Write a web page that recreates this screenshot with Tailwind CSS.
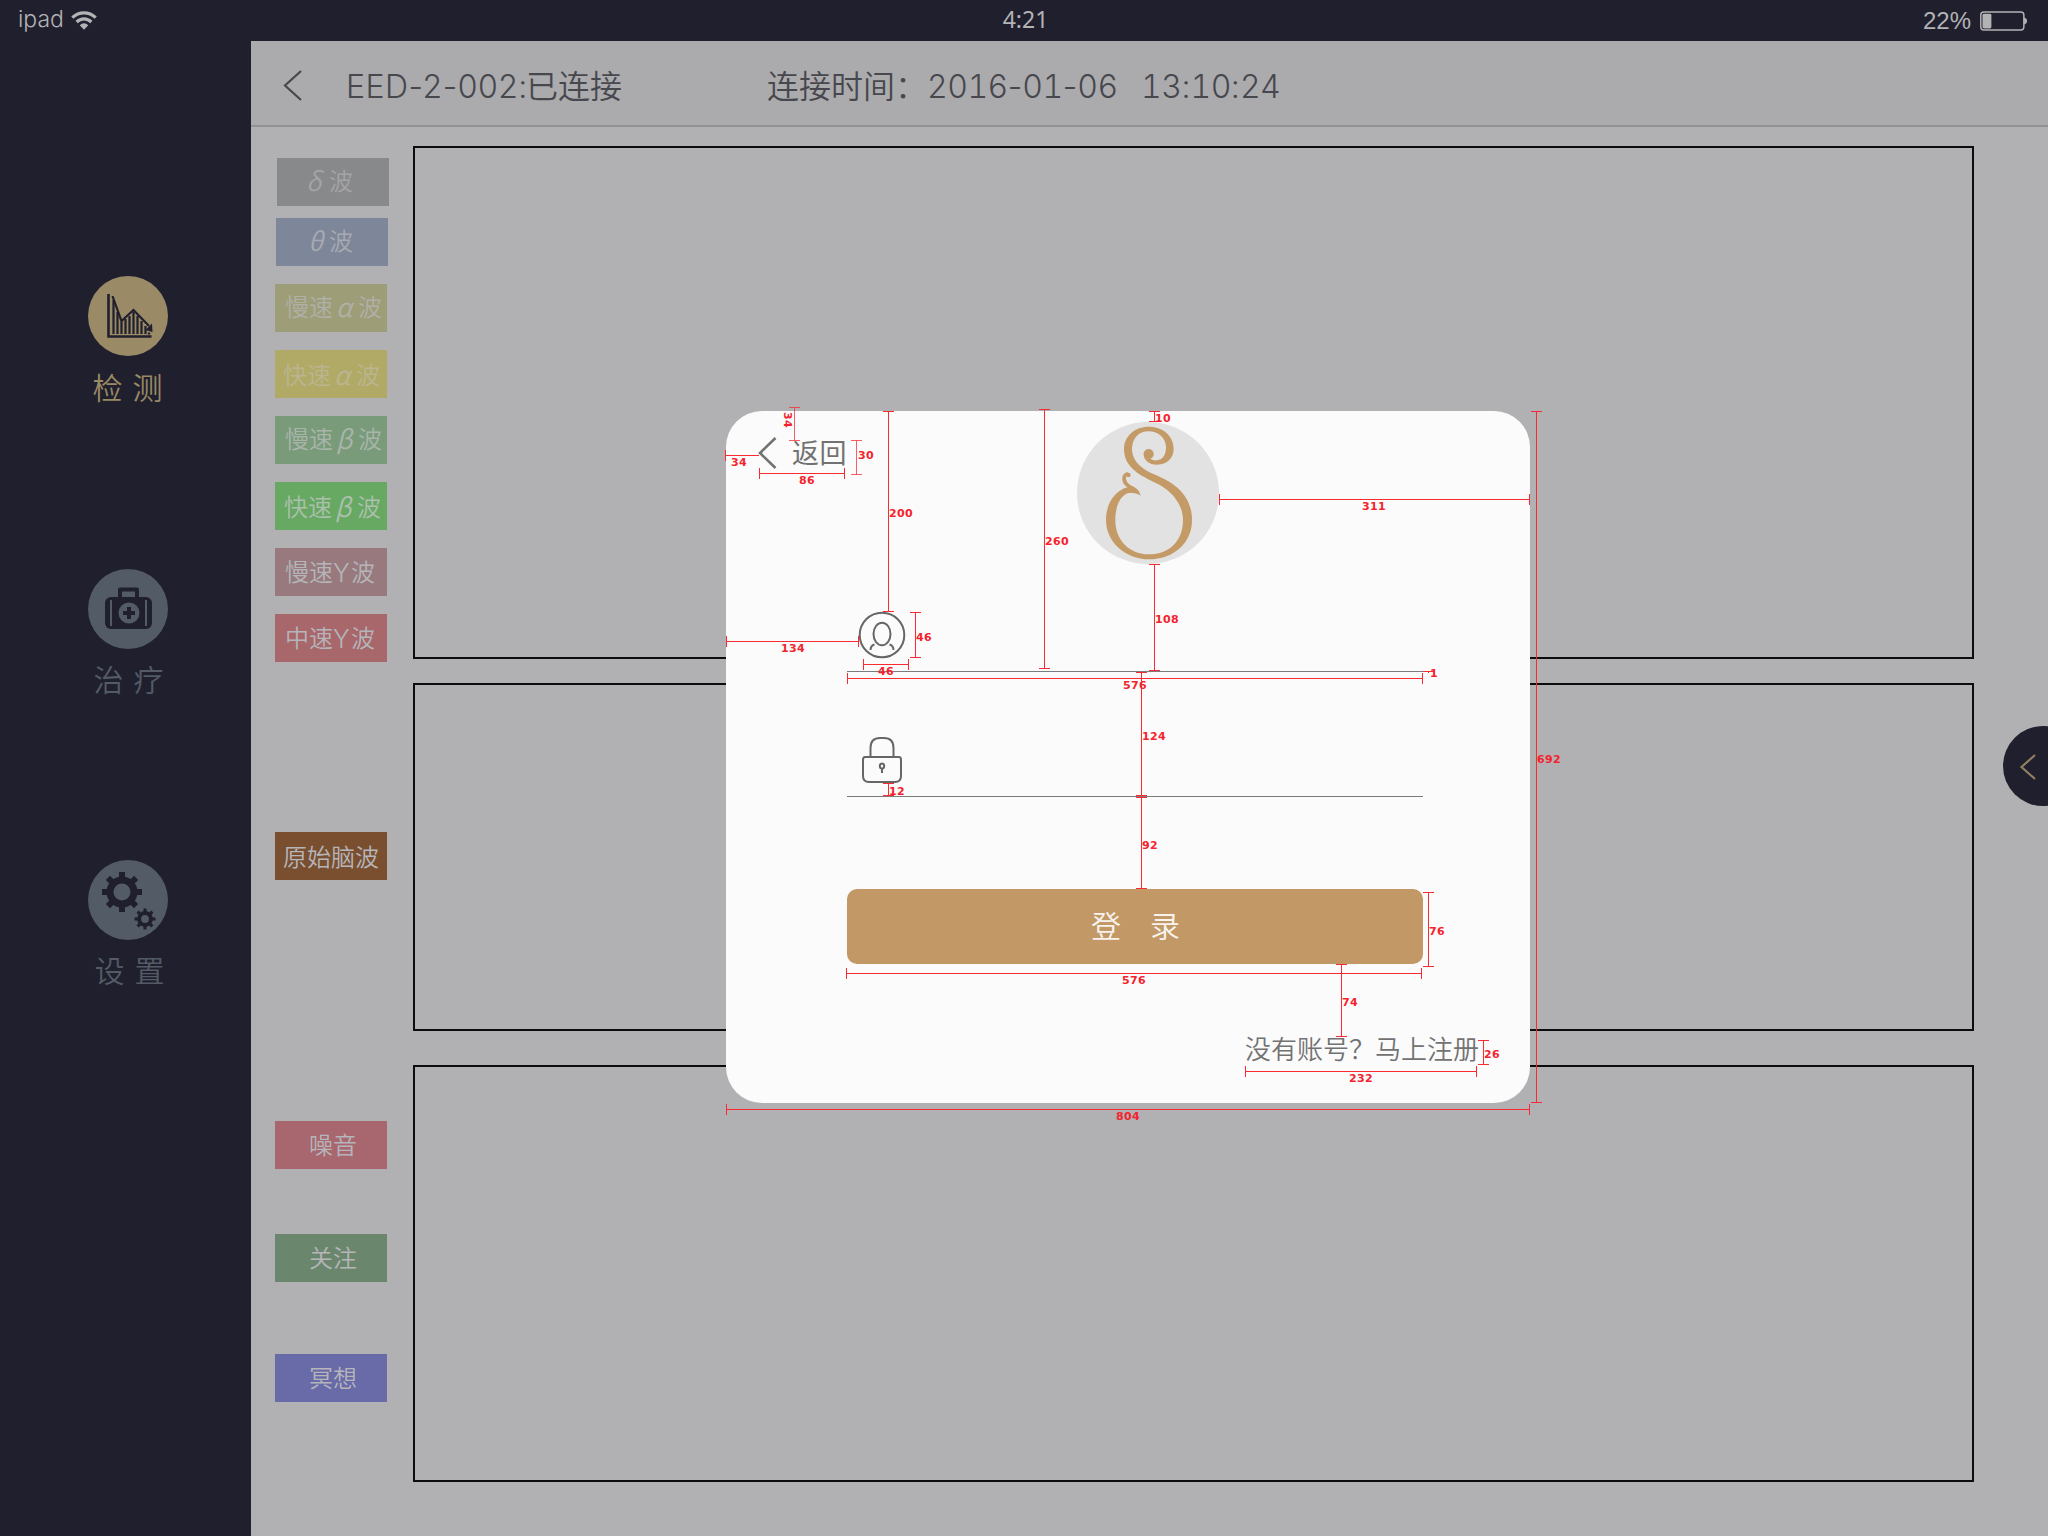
<!DOCTYPE html>
<html lang="zh-CN">
<head>
<meta charset="utf-8">
<title>EED</title>
<script src="https://cdn.jsdelivr.net/npm/@tailwindcss/browser@4"></script>
</head>
<body class="relative flex h-[1536px] w-[2048px] flex-col overflow-hidden bg-[#201f2d] font-['Liberation_Sans','Noto_Sans_CJK_SC',sans-serif]">

<!-- Status bar -->
<header class="flex h-[41px] shrink-0 items-center justify-between pr-5 pl-[18px] text-[#b3b3b6]">
  <div class="flex w-[120px] items-center gap-[7px]">
    <span class="w-[46px] pb-[3px] font-['Inter'] text-[23px] leading-[36px] font-light">ipad</span>
    <svg class="h-[19px] w-[26px]" viewBox="0 0 26 19" fill="none" stroke="currentColor" stroke-width="3.2">
      <path d="M1.3 6.6C8 .3 18 .3 24.7 6.600"/><path d="M5.600 11C10 6.800 16 6.800 20.400 11"/>
      <path d="M8.700 14.300Q13 10.300 17.300 14.300L13 18.700Z" fill="currentColor" stroke="none"/>
    </svg>
  </div>
  <span class="pr-[10px] pb-1 font-['Noto_Sans'] text-[23px] leading-[36px]">4:21</span>
  <div class="flex w-[105px] items-center gap-2">
    <span class="w-[50px] text-[24px] leading-[38px]">22%</span>
    <svg class="h-5 w-12" viewBox="0 0 48 20">
      <rect x=".8" y="1" width="43.500" height="18" rx="3" fill="none" stroke="currentColor" stroke-width="1.500"/>
      <rect x="2.500" y="2.600" width="9" height="15" rx="1.500" fill="currentColor"/>
      <path d="M44.500 6.500C48.500 7 48.500 13 44.500 13.500Z" fill="currentColor"/>
    </svg>
  </div>
</header>

<div class="flex flex-1">
  <!-- Side navigation -->
  <nav class="flex w-[251px] shrink-0 flex-col items-center pt-[235px] pl-[5px] text-[30px] leading-[40px] font-[350]">
    <a class="flex h-[293px] flex-col items-center text-[#9a8a65]">
      <svg class="size-20" viewBox="0 0 80 80">
        <circle cx="40" cy="40" r="40" fill="currentColor"/>
        <g fill="none" stroke="#201f2d">
          <path d="M20.500 18V60.500H63.500" stroke-width="2.600"/>
          <path d="M24.500 20L33.500 45L45.500 34L61 50" stroke-width="2.200"/>
          <path d="M25.500 24V58M29.500 36V58M33.500 46V58M37.500 43V58M41.500 40V58M45.500 36V58M49.500 40V58M53.500 45V58M57.500 50V58" stroke-width="2.200"/>
          <path d="M61 56.500V58.500" stroke-width="2.200"/>
        </g>
        <path d="M64.500 56L57.500 54L64 47.500Z" fill="#201f2d"/>
      </svg>
      <span class="mt-[13px] flex gap-[10px] pr-px"><span>检</span><span>测</span></span>
    </a>
    <a class="flex h-[291px] flex-col items-center text-[#525b66]">
      <svg class="size-20" viewBox="0 0 80 80">
        <circle cx="40" cy="40" r="40" fill="currentColor"/>
        <path d="M32 28V20.500H49V28" fill="none" stroke="#201f2d" stroke-width="4" stroke-linejoin="round"/>
        <rect x="17" y="28" width="47" height="32" rx="6" fill="#201f2d"/>
        <path d="M23 31V57M58 31V57" stroke="currentColor" stroke-width="2"/>
        <circle cx="41" cy="44" r="10.500" fill="currentColor"/>
        <path d="M41 38V50M35 44H47" stroke="#201f2d" stroke-width="4"/>
      </svg>
      <span class="mt-3 flex gap-[10px] pl-px"><span>治</span><span>疗</span></span>
    </a>
    <a class="flex flex-col items-center text-[#525b66]">
      <svg class="size-20" viewBox="0 0 80 80">
        <circle cx="40" cy="40" r="40" fill="currentColor"/>
        <g stroke="#201f2d" fill="none">
          <circle cx="34" cy="32" r="12" stroke-width="7"/>
          <path d="M34 12V18M34 46V52M14 32H20M48 32H54M19.900 17.900L24.500 22.500M43.500 41.500L48.100 46.100M48.100 17.900L43.500 22.500M24.500 41.500L19.900 46.100" stroke-width="6"/>
          <circle cx="57" cy="59" r="5.900" stroke-width="4"/>
          <path d="M57 48.500V53M57 65V69.500M46.500 59H51M63 59H67.500M49.600 51.600L53 55M61 63L64.400 66.400M64.400 51.600L61 55M53 63L49.600 66.400" stroke-width="3"/>
        </g>
      </svg>
      <span class="mt-3 flex gap-[10px] pl-[3px]"><span>设</span><span>置</span></span>
    </a>
  </nav>

  <main class="flex flex-1 flex-col bg-[#b1b1b3]">
    <!-- Title bar -->
    <div class="flex h-[86px] shrink-0 items-center border-b-2 border-[#929295] bg-[#ababad] pt-[3px] pl-8 font-['Inter','Noto_Sans_CJK_SC',sans-serif] text-[32px] font-light text-[#47474e] [&_b]:font-light [&_b]:tracking-[-.5px] [&_b]:tabular-nums [&>span]:pt-1">
      <svg class="h-8 w-5" viewBox="0 0 20 32" fill="none" stroke="currentColor" stroke-width="2.200"><path d="M18 2L2 16.500L18 31"/></svg>
      <span class="ml-[43px] w-[180px] leading-[48px] tracking-[.5px] whitespace-nowrap">EED-2-002:</span>
      <span class="w-[241px] text-[32px] leading-[48px] font-[350]">已连接</span>
      <span class="w-[160px] text-[32px] leading-[48px] font-[350] whitespace-nowrap">连接时间：</span>
      <span class="w-[214px] leading-[48px] whitespace-nowrap"><b>2016</b>-<b>01</b>-<b>06</b></span>
      <span class="leading-[48px] whitespace-nowrap"><b>13</b>:<b>10</b>:<b>24</b></span>
    </div>

    <div class="flex flex-1">
      <!-- Channel legend -->
      <div class="flex w-[162px] shrink-0 flex-col pt-[31px] pl-6 text-[24px] leading-[48px] font-[350] whitespace-nowrap text-[#b5b5ba] [&_i]:-mt-[2px] [&_i]:font-['Noto_Sans_CJK_SC'] [&_i]:text-[26px] [&>div]:flex [&>div]:h-12 [&>div]:w-[112px]">
        <div class="ml-0.5 bg-[#88898b] pl-[29px] text-[#a4a4a7]"><i class="w-[23px]">δ</i>波</div>
        <div class="mt-3 ml-px bg-[#7e8799] pl-[32px] text-[#a7aab2]"><i class="w-[21px]">θ</i>波</div>
        <div class="mt-[18px] bg-[#9d9d77] pl-[10px] text-[#b0b0a8]">慢速<i class="w-[25px] pl-[3px]">α</i>波</div>
        <div class="mt-[18px] bg-[#b1aa66] pl-2 leading-[52px] text-[#bab590]">快速<i class="w-[25px] pl-[3px]">α</i>波</div>
        <div class="mt-[18px] bg-[#7a9b7a] pl-[10px] text-[#a9b5aa]">慢速<i class="w-[25px] pl-[3px]">β</i>波</div>
        <div class="mt-[18px] bg-[#67a863] pl-[9px] leading-[51px] text-[#acc0ad]">快速<i class="w-[25px] pl-[3px]">β</i>波</div>
        <div class="mt-[18px] bg-[#987a7e] pl-[10px] leading-[50px]">慢速<span class="w-[18px] font-['Inter'] text-[25px] font-light">Y</span>波</div>
        <div class="mt-[18px] bg-[#a8676a] pl-[10px] leading-[50px]">中速<span class="w-[18px] font-['Inter'] text-[25px] font-light">Y</span>波</div>
        <div class="mt-[170px] bg-[#7a4f30] pl-2 leading-[52px]">原始脑波</div>
        <div class="mt-[241px] bg-[#a8676f] pl-[34px] leading-[50px]">噪音</div>
        <div class="mt-[65px] bg-[#6a876d] pl-[34px] leading-[49px]">关注</div>
        <div class="mt-[72px] bg-[#696aa8] pl-[34px] leading-[49px]">冥想</div>
      </div>
      <!-- Waveform panels -->
      <div class="flex w-[1561px] flex-col pt-[19px]">
        <section class="h-[513px] border-2 border-[#0c0c0e]"></section>
        <section class="mt-6 h-[348px] border-2 border-[#0c0c0e]"></section>
        <section class="mt-[34px] h-[417px] border-2 border-[#0c0c0e]"></section>
      </div>
    </div>
  </main>
</div>

<!-- Drawer handle -->
<button class="absolute top-[726px] left-[2003px] size-20 rounded-full bg-[#201f2d] text-[#91805f]">
  <svg class="size-20" viewBox="0 0 80 80" fill="none" stroke="currentColor" stroke-width="2.200"><path d="M32 29L18.500 41L32 53"/></svg>
</button>

<!-- Login dialog -->
<div class="absolute top-[411px] left-[726px] flex h-[692px] w-[804px] flex-col rounded-[36px] bg-[#fbfbfb] text-[#727272]">
  <div class="flex h-[153px] items-start pt-[11px] pl-[32px]">
    <a class="mt-[13px] flex w-[319px] items-start">
      <svg class="h-[34px] w-5" viewBox="0 0 20 34" fill="none" stroke="currentColor" stroke-width="2.600"><path d="M17.500 3L2 18L17.500 33"/></svg>
      <span class="mt-[2px] ml-[14px] text-[27px] leading-[34px] tracking-[.5px]">返回</span>
    </a>
    <svg class="size-[142px]" viewBox="81 81 426 426">
      <circle cx="294" cy="294" r="213" fill="#e2e2e2"/>
      <g fill="#c49a66">
        <circle cx="296" cy="177" r="15"/>
        <circle cx="235" cy="240" r="7"/>
        <path d="M311 178C309 184 304 187 301 190C306 197 318 197 324 195C342 191 348 176 348 155C346 126 322 109 296 109C265 109 246 130 246 165C248 202 279 224 312 238C368 261 426 297 426 375C426 445 370 493 297 493C225 493 168 440 168 375C168 328 193 288 232 277C211 264 212 235 232 231L236 236C225 238 225 258 238 268C252 278 266 279 272 302C260 293 248 294 235 294C207 303 196 340 196 375C196 438 240 478 297 478C358 478 399 438 399 375C399 328 366 290 328 269C285 247 222 225 222 162C222 122 256 95 296 95C341 95 371 124 371 162C371 190 350 209 322 209C295 209 281 194 281 176Z"/>
      </g>
    </svg>
  </div>
  <div class="ml-[121px] flex h-[108px] w-[576px] items-end border-b border-[#7c7c7c] pb-[12px] pl-[11px] text-[#666]">
    <svg class="size-12" viewBox="0 0 48 48" fill="none" stroke="currentColor" stroke-width="2">
      <circle cx="24" cy="24" r="22.300"/><ellipse cx="24" cy="23" rx="8.500" ry="11.300"/>
      <path d="M12.500 39Q12.700 34.500 16.500 33.500M35.500 39Q35.300 34.500 31.500 33.500"/>
    </svg>
  </div>
  <div class="ml-[121px] flex h-[125px] w-[576px] items-end border-b border-[#7c7c7c] pb-3 pl-[14px] text-[#666]">
    <svg class="h-12 w-[42px]" viewBox="0 0 42 48" fill="none" stroke="currentColor" stroke-width="2">
      <path d="M4 21H38Q40 21 40 24V40Q40 46 34 46H8Q2 46 2 40V24Q2 21 4 21Z"/>
      <path d="M9.500 21V12Q9.500 2 19 2H23Q32.500 2 32.500 12V21"/>
      <ellipse cx="21" cy="30" rx="2.200" ry="2.500"/><path d="M21 32V37"/>
    </svg>
  </div>
  <button class="mt-[92px] ml-[121px] flex h-[75px] w-[576px] shrink-0 items-start gap-[29px] rounded-[10px] bg-[#c29866] pt-4 pl-[244px] text-[30px] leading-[44px] font-[350] text-[#f8f3ec]"><span>登</span><span>录</span></button>
  <a class="mt-[69px] ml-[519px] text-[26px] leading-[34px] font-[350] whitespace-nowrap">没有账号？马上注册</a>
</div>

<!-- Dimension annotations -->
<svg class="pointer-events-none absolute inset-0 h-[1536px] w-[2048px] font-['DejaVu_Sans'] text-[11px] font-bold tracking-[.35px]" viewBox="0 0 2048 1536">
  <g fill="none" stroke="#fa2a33" stroke-width="1">
    <path d="M794.500 407V440M789 440.500H800M789 407.500H800" stroke-opacity=".75"/>
    <path d="M725.500 455.500H759M725.500 450V461"/>
    <path d="M759.500 473.500H844.500M759.500 468V479M844.500 468V479"/>
    <path d="M856.500 440.500V474.500M851 440.500H862M851 474.500H862" stroke-opacity=".75"/>
    <path d="M888.500 411.500V611.500M883 411.500H894M883 611.500H894"/>
    <path d="M1044.500 409.500V668.500M1039 409.500H1050M1039 668.500H1050"/>
    <path d="M726.500 641.500H858.500M726.500 636V647M858.500 636V647"/>
    <path d="M915.500 612.500V657.500M910 612.500H921M910 657.500H921"/>
    <path d="M863.500 664.500H908.500M863.500 659V670M908.500 659V670"/>
    <path d="M847.500 678.500H1422.500M847.500 673V684M1422.500 673V684"/>
    <path d="M1423 671.500H1434M1428.500 671V673"/>
    <path d="M1154.500 411.500V421.500M1149 411.500H1160M1149 421.500H1160"/>
    <path d="M1219.500 499.500H1529.500M1219.500 494V505M1529.500 494V505"/>
    <path d="M1154.500 564.500V670.500M1149 564.500H1160M1149 670.500H1160"/>
    <path d="M1536.500 411.500V1102.500M1531 411.500H1542M1531 1102.500H1542"/>
    <path d="M1141.500 672.500V795.500M1136 672.500H1147M1136 795.500H1147"/>
    <path d="M888.500 783.500V795.500M883 783.500H894M883 795.500H894"/>
    <path d="M1141.500 797.500V888.500M1136 797.500H1147M1136 888.500H1147"/>
    <path d="M1428.500 892.500V966.500M1423 892.500H1434M1423 966.500H1434"/>
    <path d="M846.500 973.500H1421.500M846.500 968V979M1421.500 968V979"/>
    <path d="M1341.500 964.500V1036.500M1336 964.500H1347M1336 1036.500H1347"/>
    <path d="M1483.500 1040.500V1064.500M1478 1040.500H1489M1478 1064.500H1489"/>
    <path d="M1245.500 1071.500H1476.500M1245.500 1066V1077M1476.500 1066V1077"/>
    <path d="M726.500 1109.500H1529.500M726.500 1104V1115M1529.500 1104V1115"/>
  </g>
  <g fill="#f4232d">
    <text transform="translate(784 412) rotate(90)">34</text>
    <text x="731" y="466">34</text><text x="799" y="484">86</text><text x="858" y="459">30</text>
    <text x="889" y="517">200</text><text x="1045" y="545">260</text><text x="781" y="652">134</text>
    <text x="916" y="641">46</text><text x="878" y="675">46</text><text x="1123" y="689">576</text>
    <text x="1430" y="677">1</text><text x="1155" y="422">10</text><text x="1362" y="510">311</text>
    <text x="1155" y="623">108</text><text x="1537" y="763">692</text><text x="1142" y="740">124</text>
    <text x="889" y="795">12</text><text x="1142" y="849">92</text><text x="1429" y="935">76</text>
    <text x="1122" y="984">576</text><text x="1342" y="1006">74</text><text x="1484" y="1058">26</text>
    <text x="1349" y="1082">232</text><text x="1116" y="1120">804</text>
  </g>
</svg>
</body>
</html>
